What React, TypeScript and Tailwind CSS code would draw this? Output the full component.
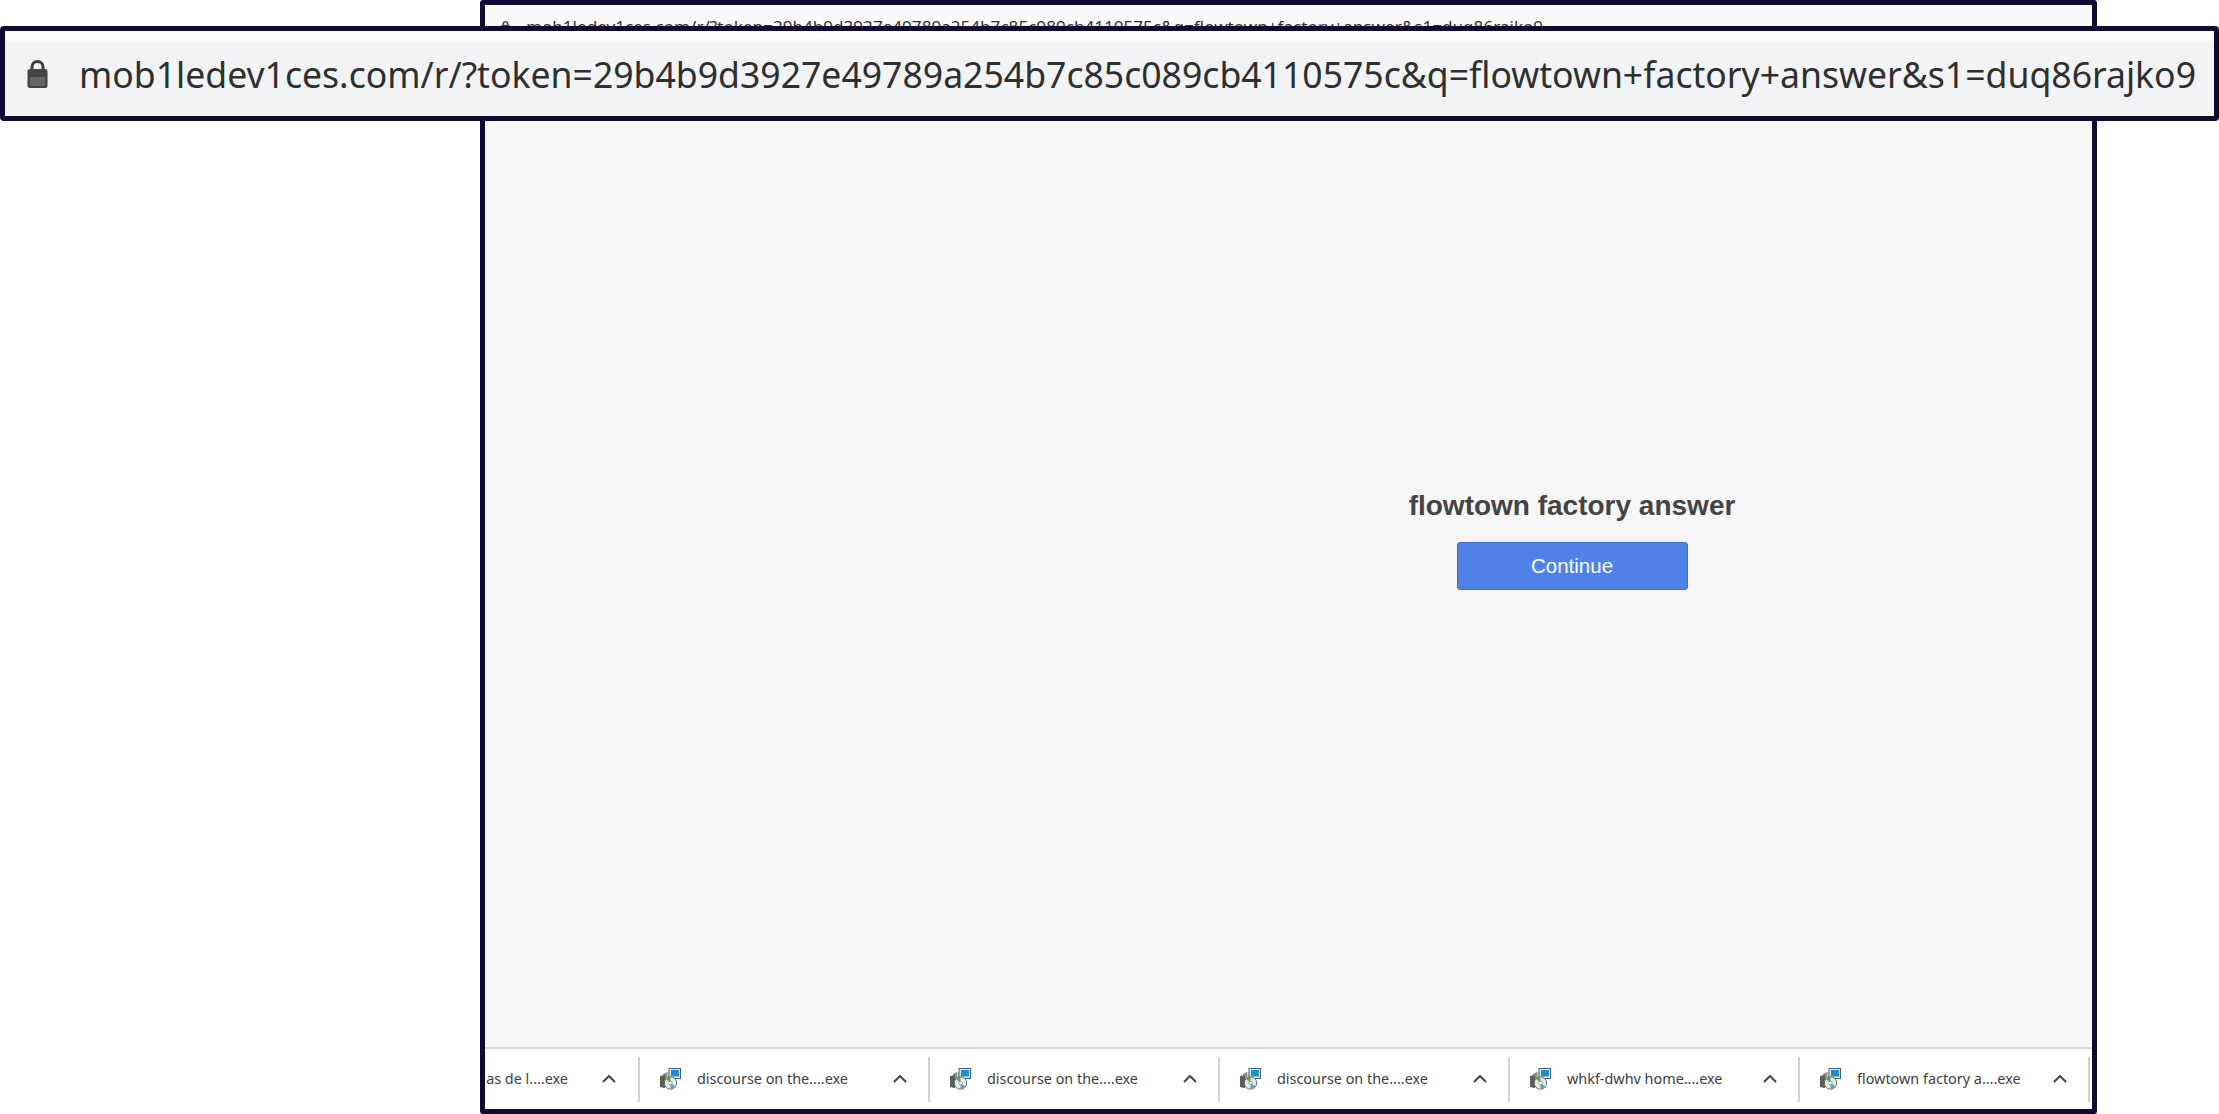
const URL_TEXT = "mob1ledev1ces.com/r/?token=29b4b9d3927e49789a254b7c85c089cb4110575c&q=flowtown+factory+answer&s1=duq86rajko9";

function Lock({ className }: { className: string }) {
  return (
    <svg viewBox="0 0 21 30" className={className}>
      <path d="M5 12V8a5.5 5.5 0 0 1 11 0v4" fill="none" stroke="#3c3c3c" strokeWidth="3" />
      <rect x="0.5" y="10" width="20" height="19" rx="2.5" fill="#444" />
      <rect x="3" y="18" width="15" height="9" fill="#666" />
    </svg>
  );
}

function ExeIcon() {
  return (
    <svg viewBox="0 0 22 22" className="w-[22px] h-[22px] shrink-0">
      <path d="M4 6l4-2v14l-4 2z" fill="#8a8f8a" />
      <path d="M8 4l3 1v4H8z" fill="#c9c9c9" />
      <rect x="10" y="0.5" width="11.5" height="10" fill="#dfe9f2" stroke="#41627e" strokeWidth="1" />
      <rect x="12" y="2" width="8" height="6.5" fill="#1f8fc4" />
      <path d="M1 8l5-1v13l-5-1z" fill="#5b5f5b" />
      <circle cx="11.5" cy="15" r="6.2" fill="#e5ede5" stroke="#667066" strokeWidth="1" />
      <path d="M11.5 15L7 10.8a6 6 0 0 1 4.5-2z" fill="#5da34f" />
      <path d="M11.5 15l5 3.6a6 6 0 0 1-5 2.4z" fill="#5f9dd0" />
      <circle cx="11.5" cy="15" r="1.8" fill="#fff" stroke="#667066" strokeWidth="0.6" />
    </svg>
  );
}

function Chevron() {
  return (
    <svg viewBox="0 0 14 8" className="w-[14px] h-[8px] shrink-0">
      <path d="M1 7l6-6 6 6" fill="none" stroke="#444" strokeWidth="2" />
    </svg>
  );
}

function Item({ name }: { name: string }) {
  return (
    <div className="w-[290px] h-[45px] shrink-0 flex items-center border-r-2 border-[#d2d2d2]">
      <div className="ml-[19px] w-[38px] shrink-0"><ExeIcon /></div>
      <span className="w-[196px] shrink-0 text-[14.4px] text-[#404040] whitespace-nowrap">{name}</span>
      <Chevron />
    </div>
  );
}

export default function App() {
  return (
    <div className="relative w-[2219px] h-[1114px] overflow-hidden bg-white font-['Noto_Sans',sans-serif]">
      <div className="ml-[480px] w-[1617px] h-[1114px] flex flex-col border-[5px] border-[#120a33] rounded-[3px] bg-[#f6f6f6]">
        <div className="h-[36px] shrink-0 pl-[16px] flex items-start pt-[12px] gap-[16px] bg-[#fafafa] text-[17.1px] leading-[20px] text-[#333] whitespace-nowrap">
          <Lock className="w-[9px] h-[14px] mt-[3px]" />
          <span>{URL_TEXT}</span>
        </div>
        <div className="flex-1 flex justify-end">
          <div className="w-[1040px] pt-[448px] flex flex-col items-center">
            <h1 className="font-['Liberation_Sans',sans-serif] font-bold text-[28px] leading-[34px] text-[#444]">flowtown factory answer</h1>
            <button className="mt-[19px] w-[231px] h-[48px] rounded-[3px] bg-[#4f81e8] border border-[#3f6fd0] text-white font-['Liberation_Sans',sans-serif] text-[20.5px]">Continue</button>
          </div>
        </div>
        <div className="h-[62px] shrink-0 bg-white border-t-2 border-[#d8d8d8] flex items-center justify-end overflow-hidden">
          <div className="w-[154px] h-[45px] shrink-0 flex items-center justify-end border-r-2 border-[#d2d2d2] overflow-hidden">
            <span className="text-[14.4px] text-[#404040] whitespace-nowrap mr-[34px]">tas de l....exe</span>
            <span className="mr-[22px]"><Chevron /></span>
          </div>
          <Item name="discourse on the....exe" />
          <Item name="discourse on the....exe" />
          <Item name="discourse on the....exe" />
          <Item name="whkf-dwhv home....exe" />
          <Item name="flowtown factory a....exe" />
          <div className="w-[2px] shrink-0" />
        </div>
      </div>
      <div className="absolute left-0 top-[26px] w-[2219px] h-[95px] border-[5px] border-[#120a33] rounded-[4px] bg-[linear-gradient(#ffffff_0px,#ffffff_7px,#f1f3f4_12px)] flex items-center pl-[22px] gap-[31px] whitespace-nowrap">
        <Lock className="w-[21px] h-[30px] shrink-0" />
        <span className="text-[35.6px] text-[#2f2f2f] mt-[3px]">{URL_TEXT}</span>
      </div>
    </div>
  );
}
